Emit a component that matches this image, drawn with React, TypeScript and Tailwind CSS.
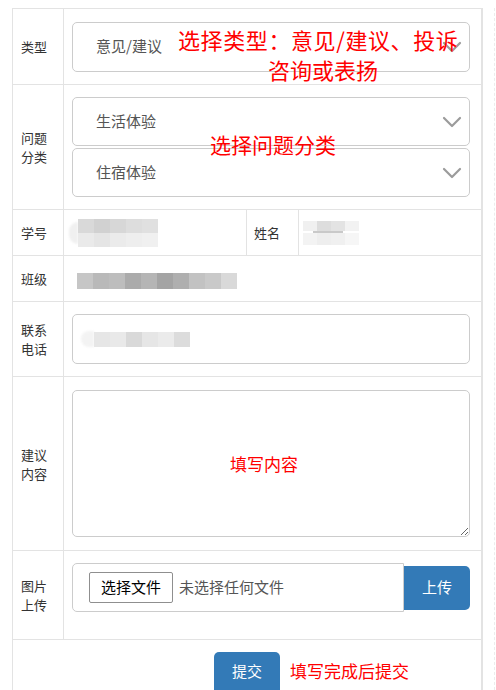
import React from 'react';

const Chevron = () => (
  <svg width="20" height="12" viewBox="0 0 20 12" fill="none" stroke="#9b9b9b" strokeWidth="2.2" strokeLinecap="round" strokeLinejoin="round">
    <path d="M2 2l8 8 8-8" />
  </svg>
);

const Select = ({ text, className }: { text: string; className: string }) => (
  <div className={`flex items-center justify-between border border-[#cccccc] rounded-[5px] bg-white pl-[23px] pr-[7px] text-[15px] text-[#555] ${className}`}>
    <span>{text}</span>
    <Chevron />
  </div>
);

// pixelated (redacted) values
const Mosaic = ({ rows, w, h }: { rows: string[][]; w: number; h: number }) => (
  <div className="flex flex-col blur-[0.6px]">
    {rows.map((r, i) => (
      <div key={i} className="flex">
        {r.map((c, j) => (
          <div key={j} style={{ backgroundColor: c, width: w, height: h }} />
        ))}
      </div>
    ))}
  </div>
);

const Label = ({ children }: { children: React.ReactNode }) => (
  <div className="w-[51px] shrink-0 border-r border-[#e3e3e3] pl-[8px] flex items-center text-[13px] leading-[19px] text-[#333]">
    <div>{children}</div>
  </div>
);

const App = () => {
  return (
    <div className="relative w-[496px] h-[690px] overflow-hidden bg-white flex pt-[8px] font-['Noto_Sans_CJK_SC',sans-serif]">
      <div className="w-[12px] shrink-0" />

      <div className="w-[471px] shrink-0 border-t border-l border-r-2 border-[#e3e3e3] flex flex-col">
        {/* 类型 */}
        <div className="h-[76px] shrink-0 flex border-b border-[#e3e3e3]">
          <Label>类型</Label>
          <div className="flex-1 pl-[8px] pr-[11px] flex flex-col justify-center">
            <Select text="意见/建议" className="h-[50px]" />
          </div>
        </div>

        {/* 问题分类 */}
        <div className="h-[125px] shrink-0 flex border-b border-[#e3e3e3]">
          <Label>问题<br />分类</Label>
          <div className="flex-1 pl-[8px] pr-[11px] flex flex-col justify-center gap-[2px]">
            <Select text="生活体验" className="h-[49px]" />
            <Select text="住宿体验" className="h-[49px]" />
          </div>
        </div>

        {/* 学号 / 姓名 */}
        <div className="h-[46px] shrink-0 flex border-b border-[#e3e3e3]">
          <Label>学号</Label>
          <div className="w-[183px] shrink-0 border-r border-[#e3e3e3] flex items-center pl-[5px]">
            <div className="w-[9px] h-[22px] rounded-l-full bg-[#f0f0f0] blur-[1px]" />
            <Mosaic
              w={16}
              h={14}
              rows={[
                ['#d9d9d9', '#d1d1d1', '#d7d7d7', '#dddddd', '#e0e0e0'],
                ['#eaeaea', '#e5e5e5', '#ebebeb', '#eeeeee', '#f0f0f0'],
              ]}
            />
          </div>
          <div className="w-[52px] shrink-0 border-r border-[#e3e3e3] pl-[7px] flex items-center text-[13px] text-[#333]">
            姓名
          </div>
          <div className="flex-1 flex items-center pl-[4px]">
            <div className="flex flex-col">
              <Mosaic w={14} h={10} rows={[['#f0f0f0', '#dddddd', '#e3e3e3', '#f2f2f2']]} />
              <div className="ml-[10px] w-[30px] h-[2px] bg-[#c9c9c9] blur-[0.4px]" />
              <Mosaic w={14} h={12} rows={[['#f3f3f3', '#eeeeee', '#f0f0f0', '#f6f6f6']]} />
            </div>
          </div>
        </div>

        {/* 班级 */}
        <div className="h-[46px] shrink-0 flex border-b border-[#e3e3e3]">
          <Label>班级</Label>
          <div className="flex-1 flex items-center pl-[13px] pt-[4px]">
            <Mosaic
              w={16}
              h={16}
              rows={[['#c6c6c6', '#b9b9b9', '#bdbdbd', '#ababab', '#b5b5b5', '#a4a4a4', '#afafaf', '#c2c2c2', '#c9c9c9', '#d9d9d9']]}
            />
          </div>
        </div>

        {/* 联系电话 */}
        <div className="h-[75px] shrink-0 flex border-b border-[#e3e3e3]">
          <Label>联系<br />电话</Label>
          <div className="flex-1 pl-[8px] pr-[11px] flex flex-col justify-center">
            <div className="h-[50px] border border-[#cccccc] rounded-[5px] flex items-center pl-[8px]">
              <div className="w-[13px] h-[16px] rounded-l-full bg-[#f3f3f3] blur-[1px]" />
              <Mosaic w={16} h={15} rows={[['#e6e6e6', '#e9e9e9', '#d9d9d9', '#e6e6e6', '#ebebeb', '#dcdcdc']]} />
            </div>
          </div>
        </div>

        {/* 建议内容 */}
        <div className="h-[174px] shrink-0 flex border-b border-[#e3e3e3]">
          <Label>建议<br />内容</Label>
          <div className="flex-1 pl-[8px] pr-[11px] flex flex-col justify-center">
            <textarea className="h-[147px] w-full border border-[#cccccc] rounded-[5px] resize-y outline-none" />
          </div>
        </div>

        {/* 图片上传 */}
        <div className="h-[89px] shrink-0 flex border-b border-[#e3e3e3]">
          <Label>图片<br />上传</Label>
          <div className="flex-1 pl-[8px] pr-[11px] pt-[12px]">
            <div className="flex items-center">
              <div className="flex-1 h-[49px] border border-[#cccccc] rounded-l-[5px] flex items-center pl-[16px] gap-[6px] text-[15px]">
                <div className="h-[31px] px-[11px] border border-[#8f8f8f] rounded-[2px] bg-white flex items-center text-black">
                  选择文件
                </div>
                <span className="text-[#555]">未选择任何文件</span>
              </div>
              <div className="w-[66px] h-[44px] rounded-r-[5px] bg-[#337ab7] flex items-center justify-center text-white text-[15px]">
                上传
              </div>
            </div>
          </div>
        </div>

        {/* 提交 */}
        <div className="flex-1 flex justify-center pt-[12px]">
          <div className="w-[66px] h-[46px] shrink-0 pb-[8px] rounded-[5px] bg-[#337ab7] flex items-center justify-center text-white text-[15px]">
            提交
          </div>
        </div>
      </div>

      <div className="w-[12px] shrink-0 border-r border-dashed border-[#ececec]" />

      {/* red annotations */}
      <div className="absolute left-[178px] top-[24px] text-[22px] leading-[30px] tracking-[0.6px] text-[#ff0000] whitespace-nowrap">
        选择类型：意见/建议、投诉
      </div>
      <div className="absolute left-[268px] top-[54px] text-[22px] leading-[30px] text-[#ff0000]">咨询或表扬</div>
      <div className="absolute left-[210px] top-[129px] text-[21px] leading-[30px] text-[#ff0000]">选择问题分类</div>
      <div className="absolute left-[230px] top-[452px] text-[17px] leading-[24px] text-[#ff0000]">填写内容</div>
      <div className="absolute left-[290px] top-[659px] text-[17px] leading-[24px] text-[#ff0000]">填写完成后提交</div>
    </div>
  );
};

export default App;
